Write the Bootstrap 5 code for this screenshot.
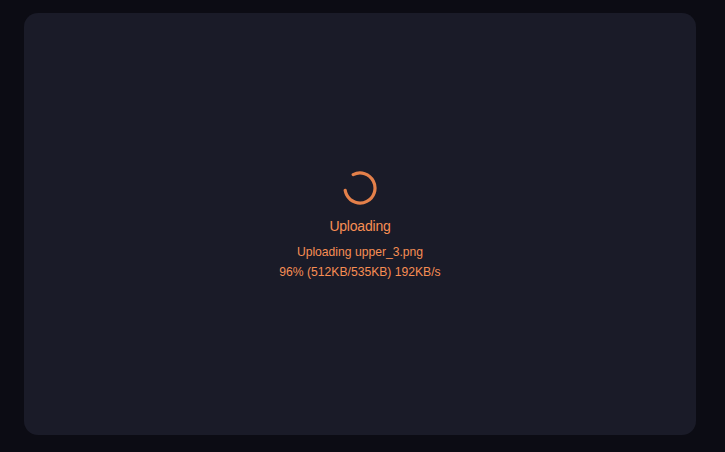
<!DOCTYPE html>
<html lang="en">
<head>
<meta charset="utf-8">
<title>Uploading</title>
<link href="https://cdn.jsdelivr.net/npm/bootstrap@5.3.0/dist/css/bootstrap.min.css" rel="stylesheet">
<style>
html, body { height: 100%; }
body { background: #0c0c14; font-family: "Liberation Sans", Arial, sans-serif; color: #f78e54; }
.shell { height: 452px; padding: 13px 29px 17px 24px; }
.panel { background: #1a1b28; border-radius: 14px; height: 100%; padding-top: 158px; }
.spin { width: 34px; height: 34px; display: block; }
.ttl { font-size: 14px; letter-spacing: -0.2px; line-height: 20px; margin-top: 11px; }
.sub { font-size: 12.15px; line-height: 20px; }
.first { margin-top: 6px; }
</style>
</head>
<body>
<div class="shell">
  <div class="panel d-flex flex-column align-items-center text-center">
    <svg class="spin" viewBox="0 0 34 34" fill="none" aria-hidden="true">
      <circle cx="17" cy="17" r="15" stroke="#e4804a" stroke-width="3.2" stroke-linecap="round" stroke-dasharray="75 19.25" transform="rotate(-117 17 17)"/>
    </svg>
    <div class="ttl">Uploading</div>
    <div class="sub first">Uploading upper_3.png</div>
    <div class="sub">96% (512KB/535KB) 192KB/s</div>
  </div>
</div>
<script src="https://cdn.jsdelivr.net/npm/bootstrap@5.3.0/dist/js/bootstrap.bundle.min.js"></script>
</body>
</html>
